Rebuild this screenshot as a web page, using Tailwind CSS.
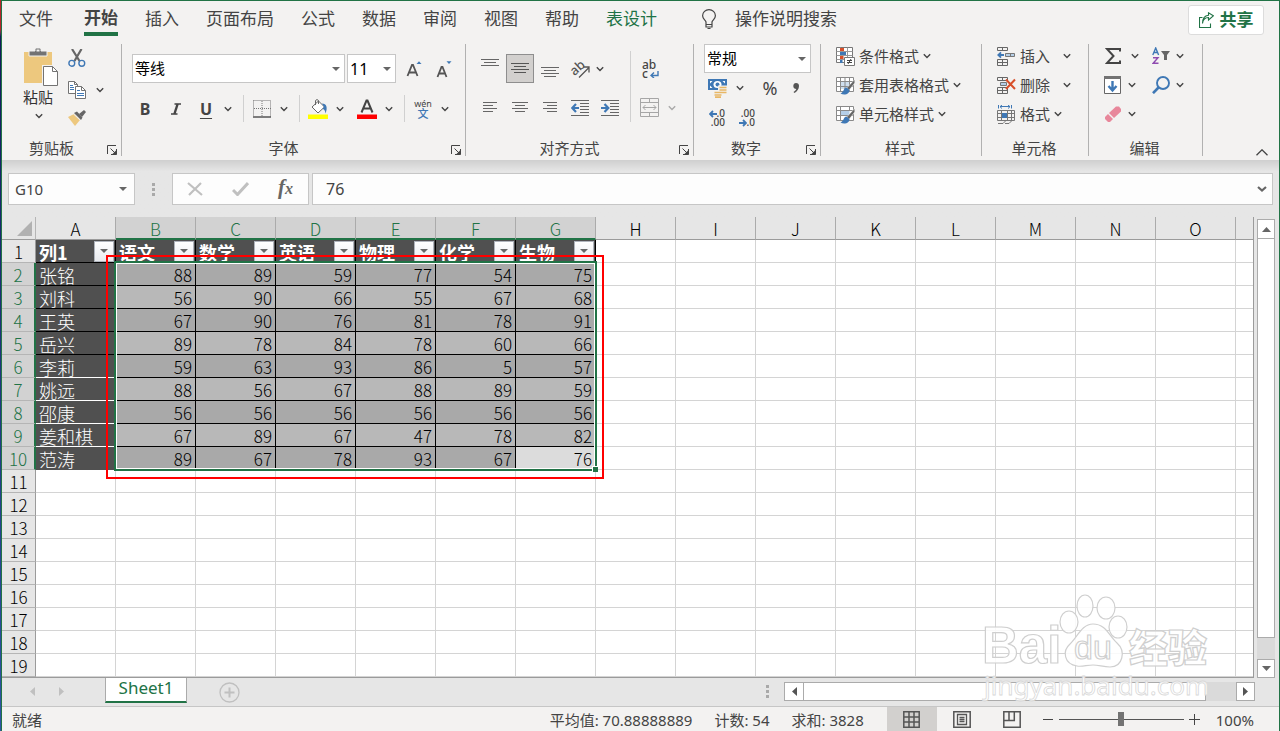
<!DOCTYPE html>
<html lang="zh-CN">
<head>
<meta charset="utf-8">
<title>Sheet1</title>
<meta name="viewport" content="width=device-width, initial-scale=1">
<script src="https://cdn.jsdelivr.net/npm/@tailwindcss/browser@4"></script>
</head>
<body class="flex h-screen overflow-hidden bg-[#e6e6e6] font-['Noto_Sans','Noto_Sans_CJK_SC',sans-serif] text-[15px] text-[#444444]">

<svg class="hidden" aria-hidden="true">
  <symbol id="chev" viewBox="0 0 8 6"><path d="M.8 1.2 4 4.4 7.2 1.2" fill="none" stroke="currentColor" stroke-width="1.4"/></symbol>
  <symbol id="tri" viewBox="0 0 8 4"><path d="M0 0h8L4 4z" fill="currentColor"/></symbol>
  <symbol id="launch" viewBox="0 0 10 10"><path d="M.5 9V.5H9M3.5 3.500 9 9M9.500 4v5.500H4" fill="none" stroke="currentColor"/><path d="M9.500 5v4.500H5z" fill="currentColor"/></symbol>
  <symbol id="brushtable" viewBox="0 0 19 19"><path d="M.5 1.500h17v14H.5z" fill="#fff"/><path d="M4.500 5h9v8h-9z" fill="#cfdfee"/><path d="M.5 1.500h17v14H.5zM.5 5.500h17M.5 10.500h17M4.500 1.500v14M9 1.500v14M13.500 1.500v14" fill="none" stroke="#8a8a8a"/><path d="M19 3v4l-6 8-3-2.500z" fill="#f3f2f1"/><path d="m18.500 4-7.500 8 2 2L18.500 7z" fill="#666"/><path d="M10.500 11.500c-3 0-2 4-6 6 4 2.500 9 .5 9-3.500z" fill="#3f78b5"/></symbol>
  <symbol id="brushcell" viewBox="0 0 19 19"><path d="M.5 1.500h17v14H.5z" fill="#fff"/><path d="M4.500 5.500h9v5h-9z" fill="#b5cfe8"/><path d="M.5 1.500h17v14H.5zM.5 5.500h17M.5 10.500h17M4.500 1.500v14M13.500 1.500v4" fill="none" stroke="#8a8a8a"/><path d="M19 3v4l-6 8-3-2.500z" fill="#f3f2f1"/><path d="m18.500 4-7.500 8 2 2L18.500 7z" fill="#666"/><path d="M10.500 11.500c-3 0-2 4-6 6 4 2.500 9 .5 9-3.500z" fill="#3f78b5"/></symbol>
</svg>

<div class="w-px shrink-0 bg-linear-to-b from-[#b3262b] from-4% via-[#131a5c] via-5% to-[#2f55a4]"></div>

<div class="flex min-w-0 flex-1 flex-col border-x border-t border-[#217346]">

  <header class="bg-[#f3f2f1]">
    <nav class="flex h-[39px] items-start pr-[15px] pl-[17px] text-[17px]" aria-label="功能区选项卡">
      <div class="flex gap-[27px] leading-8">
        <a href="#" class="pt-[2px]">文件</a>
        <a href="#" class="ml-1 border-b-4 border-[#217346] pt-[2px] font-bold leading-[29px]">开始</a>
        <a href="#" class="pt-[2px]">插入</a>
        <a href="#" class="pt-[2px]">页面布局</a>
        <a href="#" class="pt-[2px]">公式</a>
        <a href="#" class="pt-[2px]">数据</a>
        <a href="#" class="pt-[2px]">审阅</a>
        <a href="#" class="pt-[2px]">视图</a>
        <a href="#" class="pt-[2px]">帮助</a>
        <a href="#" class="pt-[2px] text-[#217346]">表设计</a>
      </div>
      <button class="ml-11 flex items-center gap-[18px] pt-[2px] leading-8">
        <svg class="h-5 w-4" viewBox="0 0 16 20" fill="none" stroke="#444" stroke-width="1.2"><path d="M5 15.500V13C4.500 11 1.600 10 1.600 6.800a6.400 6.200 0 0 1 12.800 0C14.400 10 11.500 11 11 13v2.500zM5 15.500v2.500h6v-2.500M6.500 19.500h3"/></svg>
        操作说明搜索
      </button>
      <button class="mt-1 ml-auto flex h-[30px] w-[76px] items-center justify-center gap-[6px] rounded-[3px] border border-[#dcdcdc] bg-white text-[17px] font-bold text-[#217346]">
        <svg class="h-4 w-[15px]" viewBox="0 0 15 16" fill="none" stroke="#217346" stroke-width="1.1"><path d="M3.500 5.500h-3v10h11v-4"/><path d="M3.500 11.500C4 7.500 6 5.500 9.500 5.500V8l4.800-4.200L9.500.8v2.400C5.500 3.500 3.500 6.500 3.500 11.500z"/></svg>
        共享
      </button>
    </nav>

    <div class="flex pt-1">
      <!-- clipboard -->
      <section class="flex h-[112px] w-[120px] shrink-0 flex-col justify-between border-r border-[#b1b1b1]">
        <div class="flex pl-[21px]">
          <button class="flex w-[37px] flex-col items-start pt-1">
            <svg class="h-[39px] w-9" viewBox="0 0 36 39"><path d="M1 4h28v31H1z" fill="#edc87e"/><path d="M6 8V3h6V1.500Q12 0 13.500 0h3Q18 0 18 1.500V3h6v5z" fill="#737373" stroke="#f3f2f1"/><path d="M13.500 3.500h3v-2h-3z" fill="#f3f2f1"/><path d="M19 17h17v22H19z" fill="#f3f2f1"/><path d="M20.500 18.500h9l5 5v14h-14z" fill="#fff" stroke="#737373"/><path d="M29.500 18.500v5h5" fill="none" stroke="#737373"/></svg>
            <span class="leading-5 text-[#333]">粘贴</span>
            <svg class="mt-[6px] ml-3 h-[6px] w-2"><use href="#chev"/></svg>
          </button>
          <div class="flex flex-col gap-[6px] pl-2">
            <button aria-label="剪切" class="flex h-6 items-center pt-1"><svg class="h-[18px] w-[18px]" viewBox="0 0 18 18" fill="none"><path d="m4 0 7.500 12M13.500 0 6.500 12" stroke="#666" stroke-width="2.200"/><circle cx="3.800" cy="14.300" r="2.900" stroke="#3f78b5" stroke-width="1.400"/><circle cx="13.800" cy="14.300" r="2.900" stroke="#3f78b5" stroke-width="1.400"/></svg></button>
            <button aria-label="复制" class="flex h-7 items-center gap-[10px] pt-1"><svg class="h-[18px] w-[18px]" viewBox="0 0 18 18" fill="#fff" stroke="#737373"><path d="M.5.5h6l3 3v9h-9z"/><path d="M7.500 5.500h6l4 4v8h-10z"/><path d="M13.500 5.500v4h4M6.500.5v3h3" fill="none"/><path d="M2 4.500h3M2 6.500h4M2 8.500h4M9 9.500h3M9 12.500h7M9 14.500h7" stroke="#3f78b5"/></svg><svg class="h-[6px] w-2"><use href="#chev"/></svg></button>
            <button aria-label="格式刷" class="flex h-5 items-center"><svg class="h-4 w-[18px]" viewBox="0 0 18 16"><path d="m0 7 6-3 6 6-5 6z" fill="#edc87e"/><path d="m6 3 3-1.500 5.500 6L13 10z" fill="#666"/><path d="m11 4 5-4 2 2-4 5z" fill="#666"/><path d="m5.500 4 7 6.500" stroke="#f3f2f1"/></svg></button>
          </div>
        </div>
        <footer class="flex items-center pr-1 leading-4"><span class="flex-1 text-center">剪贴板</span><button aria-label="剪贴板设置" class="pt-1 pl-[6px]"><svg class="h-[10px] w-[10px]"><use href="#launch"/></svg></button></footer>
      </section>

      <!-- font -->
      <section class="flex h-[112px] w-[344px] shrink-0 flex-col justify-between border-r border-[#b1b1b1]">
        <div class="pt-[10px] pl-2">
          <div class="flex gap-[2px] pl-[2px]">
            <label class="relative flex items-center">
              <select aria-label="字体" class="h-[29px] w-[213px] appearance-none border border-[#c6c6c6] bg-white pl-[2px] text-black"><option>等线</option></select>
              <svg class="absolute right-[5px] h-1 w-2 text-[#666]"><use href="#tri"/></svg>
            </label>
            <label class="relative flex items-center">
              <select aria-label="字号" class="h-[29px] w-[49px] appearance-none border border-[#c6c6c6] bg-white pl-[2px] text-[16px] text-black"><option>11</option></select>
              <svg class="absolute right-[5px] h-1 w-2 text-[#666]"><use href="#tri"/></svg>
            </label>
            <button aria-label="增大字号" class="flex w-8 items-center justify-center"><svg class="h-[18px] w-4" viewBox="0 0 16 18"><path d="M10.500 4 13 1.300 15.500 4z" fill="#3f78b5"/><path d="m1.500 16 4.500-11h1l4.500 11M3.200 12.500h6.600" fill="none" stroke="#555" stroke-width="1.800"/></svg></button>
            <button aria-label="减小字号" class="flex w-6 items-center justify-center"><svg class="h-[18px] w-4" viewBox="0 0 16 18"><path d="M10.500 1.300 13 4l2.500-2.700z" fill="#3f78b5"/><path d="m1.500 17 4-10h1l4 10M3 13.500h6" fill="none" stroke="#555" stroke-width="1.800"/></svg></button>
          </div>
          <div class="mt-3 flex h-[27px] items-center text-[16px]">
            <button class="w-[30px] font-bold">B</button>
            <button class="flex w-8 justify-center" aria-label="倾斜"><svg class="h-3 w-[10px]" viewBox="0 0 10 12"><path d="M3.500 1H10M0 11h6.500" stroke="#444" stroke-width="1.500"/><path d="M6.600 1 3.400 11" stroke="#444" stroke-width="2.400"/></svg></button>
            <button class="w-7 font-bold underline underline-offset-[3px]">U</button>
            <button aria-label="下划线选项" class="flex w-4 justify-center"><svg class="h-[6px] w-2"><use href="#chev"/></svg></button>
            <span class="mr-2 ml-[7px] h-[27px] w-px bg-[#d0d0d0]"></span>
            <button aria-label="边框" class="flex w-10 items-center gap-2"><svg class="ml-px h-[18px] w-[19px]" viewBox="0 0 19 18"><path d="M.5.500h17v16M.5.500v16M9 1v16M1 8.500h17" fill="none" stroke="#777" stroke-dasharray="1 1"/><path d="M0 17h18" stroke="#555" stroke-width="1.500"/></svg><svg class="h-[6px] w-2"><use href="#chev"/></svg></button>
            <span class="mr-2 ml-[7px] h-[27px] w-px bg-[#d0d0d0]"></span>
            <button aria-label="填充颜色" class="flex w-10 items-center gap-2"><svg class="h-5 w-5" viewBox="0 0 20 20"><path d="m4 8 6.500-6 6 6-6.500 6z" fill="#fff" stroke="#666"/><path d="M7.500 6V1.500q1.500-2 3 0V5" fill="none" stroke="#666"/><path d="M14 4.500c4.500 0 6 4 3.500 10C17 11 16 10 14.500 10L16 8z" fill="#3f78b5"/><path d="M0 15.500h20V20H0z" fill="#ff0"/></svg><svg class="h-[6px] w-2"><use href="#chev"/></svg></button>
            <button aria-label="字体颜色" class="ml-[9px] flex w-10 items-center gap-2"><svg class="h-5 w-5" viewBox="0 0 20 20"><path d="m4.500 13.500 5-12h1l5 12M6.500 9.500h7" fill="none" stroke="#444" stroke-width="2"/><path d="M0 15.500h20V20H0z" fill="#f00"/></svg><svg class="h-[6px] w-2"><use href="#chev"/></svg></button>
            <span class="mr-2 ml-[7px] h-[27px] w-px bg-[#d0d0d0]"></span>
            <button aria-label="拼音指南" class="flex w-10 items-center gap-2"><span class="flex w-5 flex-col items-center text-[9px] leading-[9px]">wén<b class="text-[11px] leading-[11px] font-medium text-[#3f78b5]">文</b></span><svg class="h-[6px] w-2"><use href="#chev"/></svg></button>
          </div>
        </div>
        <footer class="flex items-center pr-1 leading-4"><span class="flex-1 text-center">字体</span><button aria-label="字体设置" class="pt-1 pl-[6px]"><svg class="h-[10px] w-[10px]"><use href="#launch"/></svg></button></footer>
      </section>

      <!-- alignment -->
      <section class="flex h-[112px] w-[228px] shrink-0 flex-col justify-between border-r border-[#b1b1b1]">
        <div class="flex pt-[7px] pl-[10px]">
          <div class="flex w-[155px] flex-col gap-[10px] border-r border-[#d0d0d0] pt-[3px]">
            <div class="flex h-[29px] gap-[2px]">
              <button aria-label="顶端对齐" class="flex w-7 justify-center pt-[5px]"><svg class="h-2 w-[18px]" viewBox="0 0 18 8"><path d="M0 .5h18M3 3.500h12M0 6.500h18" stroke="#666"/></svg></button>
              <button aria-label="垂直居中" aria-pressed="true" class="flex w-7 items-center justify-center border border-[#8e8e8e] bg-[#d2d0ce]"><svg class="h-[11px] w-[18px]" viewBox="0 0 18 11"><path d="M0 .5h18M3 3.500h12M0 6.500h18M3 9.500h12" stroke="#555"/></svg></button>
              <button aria-label="底端对齐" class="flex w-7 items-end justify-center pb-[5px]"><svg class="h-[11px] w-[18px]" viewBox="0 0 18 11"><path d="M0 .5h18M3 3.500h12M0 6.500h18M3 9.500h12" stroke="#666"/></svg></button>
              <button aria-label="方向" class="flex items-center gap-[2px]"><span class="flex w-7 justify-center"><svg class="h-[19px] w-[19px] overflow-visible" viewBox="0 0 19 19"><text x="0" y="14" transform="rotate(-42 6 11)" font-family="Noto Sans" font-size="13" font-weight="500" fill="#555">ab</text><path d="m8 18.500 10-10M12.500 8H18v5.500" fill="none" stroke="#555" stroke-width="1.300"/></svg></span><svg class="h-[6px] w-2"><use href="#chev"/></svg></button>
            </div>
            <div class="flex h-[29px] gap-[2px]">
              <button aria-label="左对齐" class="flex w-7 items-center justify-center"><svg class="h-[11px] w-[14px]" viewBox="0 0 14 11"><path d="M0 .5h14M0 3.500h10M0 6.500h14M0 9.500h10" stroke="#666"/></svg></button>
              <button aria-label="居中" class="flex w-7 items-center justify-center"><svg class="h-[11px] w-4" viewBox="0 0 16 11"><path d="M0 .5h16M3 3.500h10M0 6.500h16M3 9.500h10" stroke="#666"/></svg></button>
              <button aria-label="右对齐" class="flex w-7 items-center justify-center"><svg class="h-[11px] w-[14px]" viewBox="0 0 14 11"><path d="M0 .5h14M4 3.500h10M0 6.500h14M4 9.500h10" stroke="#666"/></svg></button>
              <button aria-label="减少缩进量" class="flex w-7 items-center justify-center"><svg class="h-4 w-[18px]" viewBox="0 0 18 16"><path d="M0 .5h18M9 3.500h9M9 6.500h9M9 9.500h9M9 12.500h9M0 15.500h18" stroke="#666"/><path d="M8 8H2M5 4 1.200 8 5 12" fill="none" stroke="#3f78b5" stroke-width="2.200"/></svg></button>
              <button aria-label="增加缩进量" class="flex w-7 items-center justify-center"><svg class="h-4 w-[18px]" viewBox="0 0 18 16"><path d="M0 .5h18M9 3.500h9M9 6.500h9M9 9.500h9M9 12.500h9M0 15.500h18" stroke="#666"/><path d="M0 8h6M3.500 4l3.800 4-3.800 4" fill="none" stroke="#3f78b5" stroke-width="2.200"/></svg></button>
            </div>
          </div>
          <div class="flex flex-col gap-[10px] pt-[3px] pl-[9px]">
            <button aria-label="自动换行" class="relative flex h-[29px] w-5 flex-col items-start justify-center pl-[2px] text-[12px] leading-[9px] font-medium"><span>ab</span><span>c</span><svg class="absolute right-px bottom-[5px] h-[7px] w-[9px]" viewBox="0 0 9 7"><path d="M8 0v4.500H1.500M4 1.500l-3 3L4 7" fill="none" stroke="#3f78b5" stroke-width="1.400"/></svg></button>
            <button aria-label="合并后居中" class="flex h-[29px] items-center gap-[9px] text-[#a9a9a9]"><svg class="h-[19px] w-[19px]" viewBox="0 0 19 19" fill="none" stroke="#a6a6a6"><path d="M.5.500h18v18H.5zM.5 4.500h18M.5 14.500h18M9.500.500v4M9.500 14.500v4M3 9.500h13M5.500 7 3 9.500 5.500 12M13.500 7 16 9.500 13.500 12"/></svg><svg class="h-[6px] w-2"><use href="#chev"/></svg></button>
          </div>
        </div>
        <footer class="flex items-center pr-1 leading-4"><span class="flex-1 text-center">对齐方式</span><button aria-label="对齐设置" class="pt-1 pl-[6px]"><svg class="h-[10px] w-[10px]"><use href="#launch"/></svg></button></footer>
      </section>

      <!-- number -->
      <section class="flex h-[112px] w-[127px] shrink-0 flex-col justify-between border-r border-[#b1b1b1]">
        <div class="pl-[10px]">
          <label class="relative flex w-[107px] items-center">
            <select aria-label="数字格式" class="h-[29px] w-full appearance-none border border-[#c6c6c6] bg-white pl-[2px] text-black"><option>常规</option></select>
            <svg class="absolute right-[5px] h-1 w-2 text-[#666]"><use href="#tri"/></svg>
          </label>
          <div class="flex h-[30px] items-center pl-1">
            <button aria-label="会计数字格式" class="flex items-center gap-2"><svg class="h-[19px] w-5" viewBox="0 0 20 19"><path d="M0 0h19v11H0z" fill="#3f78b5"/><path d="M2 2h2.500L2 4.500zM17 2h-2.500L17 4.500zM2 9V6.500L4.500 9z" fill="#fff"/><ellipse cx="9.500" cy="5.500" rx="4" ry="3.500" fill="#fff"/><circle cx="9.500" cy="5.500" r="2" fill="#3f78b5"/><path d="M10 6.500h10V18H6v-6.500h4z" fill="#f3f2f1"/><path d="M11.500 8.500h7M11.500 11h7M11.500 13.500h7M6.500 13.500h7M6.500 16h7M7 18.200h6" stroke="#e8b765" stroke-width="1.700"/></svg><svg class="h-[6px] w-2"><use href="#chev"/></svg></button>
            <button class="w-11 pl-2 text-center text-[18px] leading-6">%</button>
            <button class="flex w-4 justify-center" aria-label="千位分隔样式"><svg class="h-[10px] w-[6px]" viewBox="0 0 6 10"><path d="M3 0c2 0 3 1.200 3 3 0 3-2 5.500-4.500 7L.5 9C2 8 3 7 3.300 6 1.500 6 .3 4.800.3 3S1.500 0 3 0z" fill="#555"/></svg></button>
          </div>
          <div class="flex h-[30px] items-center gap-[14px] pl-[5px] text-[10px] leading-[9px] font-medium">
            <button aria-label="增加小数位数" class="flex w-4 flex-col items-end"><span class="flex items-center"><svg class="h-2 w-2" viewBox="0 0 8 8"><path d="M8 4H1.500M4 1 1 4l3 3" fill="none" stroke="#3f78b5" stroke-width="1.800"/></svg>.0</span><span>.00</span></button>
            <button aria-label="减少小数位数" class="flex w-4 flex-col items-end"><span>.00</span><span class="flex items-center"><svg class="h-2 w-2" viewBox="0 0 8 8"><path d="M0 4h6.500M4 1l3 3-3 3" fill="none" stroke="#3f78b5" stroke-width="1.800"/></svg>.0</span></button>
          </div>
        </div>
        <footer class="flex items-center pr-1 leading-4"><span class="flex-1 text-center">数字</span><button aria-label="数字设置" class="pt-1 pl-2"><svg class="h-[10px] w-[10px]"><use href="#launch"/></svg></button></footer>
      </section>

      <!-- styles -->
      <section class="flex h-[112px] w-[161px] shrink-0 flex-col justify-between border-r border-[#b1b1b1]">
        <div class="flex flex-col gap-[5px] pl-[15px]">
          <button class="flex h-6 items-center gap-1"><svg class="h-[19px] w-[19px]" viewBox="0 0 19 19"><path d="M.5.500h16v15H.5z" fill="#fff" stroke="#777"/><path d="M.5 4.500h16M.5 8.500h16M.5 12.500h16M4.500.500v15M11.500.500v15" stroke="#999"/><path d="M4 1h4v3H4zM4 9h3.500v3H4z" fill="#d8502b"/><path d="M4 5h6v3H4zM4 13h2.500v3H4z" fill="#3f78b5"/><path d="M8.500 10.500h10v8h-10z" fill="#fff" stroke="#777"/><path d="M11 13.500h5M11 15.500h5M15 12l-3 5" stroke="#444"/></svg>条件格式<svg class="h-[6px] w-2"><use href="#chev"/></svg></button>
          <button class="flex h-6 items-center gap-1"><svg class="h-[19px] w-[19px]"><use href="#brushtable"/></svg>套用表格格式<svg class="h-[6px] w-2"><use href="#chev"/></svg></button>
          <button class="flex h-6 items-center gap-1"><svg class="h-[19px] w-[19px]"><use href="#brushcell"/></svg>单元格样式<svg class="h-[6px] w-2"><use href="#chev"/></svg></button>
        </div>
        <footer class="pr-[2px] text-center leading-4">样式</footer>
      </section>

      <!-- cells -->
      <section class="flex h-[112px] w-[107px] shrink-0 flex-col justify-between border-r border-[#b1b1b1]">
        <div class="flex flex-col gap-[5px] pr-[17px] pl-[15px]">
          <button class="flex h-6 items-center gap-1"><svg class="h-[19px] w-[19px]" viewBox="0 0 19 19" fill="none" stroke="#666"><path d="M.5.500h10v3H.5zM5.500.500v3M.5 12.500h10v6H.5zM5.500 12.500v6M.5 15.500h10"/><path d="M8.500 6.500h9v3h-9zM13.500 6.500v3" fill="#b5cfe8" stroke="#777"/><path d="M7 8H1.500M4 5.300 1.300 8 4 10.700" stroke="#3f78b5" stroke-width="1.800"/></svg>插入<svg class="ml-auto h-[6px] w-2"><use href="#chev"/></svg></button>
          <button class="flex h-6 items-center gap-1"><svg class="h-[19px] w-[19px]" viewBox="0 0 19 19" fill="none" stroke="#666"><path d="M.5 1.500h10v3H.5zM5.500 1.500v3M.5 11.500h10v6H.5zM5.500 11.500v6M.5 14.500h10"/><path d="M3.500 6.500h6v3h-6z" fill="#b5cfe8" stroke="#777"/><path d="m9 3.500 9 9.500M18 3.500 9 13" stroke="#d8502b" stroke-width="2"/></svg>删除<svg class="ml-auto h-[6px] w-2"><use href="#chev"/></svg></button>
          <button class="flex h-6 items-center gap-1"><svg class="h-[19px] w-[19px]" viewBox="0 0 19 19" fill="none" stroke="#777"><path d="M1.500 0v3.500M14.500 0v3.500M3 1.500h10M5 0 3 1.700 5 3.500M11 0l2 1.700-2 1.800" stroke="#3f78b5"/><path d="M.5 5.500h17v10H.5zM.5 8.500h17M.5 12.500h17M4.500 5.500v10M10.500 5.500v10M14.500 5.500v10"/><path d="M5 8h5v5H5z" fill="#3f78b5" stroke="none"/><path d="M1 18.500h5l3-3M8 18.500h4l3-3"/></svg>格式<svg class="h-[6px] w-2"><use href="#chev"/></svg></button>
        </div>
        <footer class="pr-[2px] text-center leading-4">单元格</footer>
      </section>

      <!-- editing -->
      <section class="flex h-[112px] w-[114px] shrink-0 flex-col justify-between border-r border-[#b1b1b1]">
        <div class="grid grid-cols-[48px_1fr] gap-y-[5px] pl-[15px]">
          <button aria-label="自动求和" class="flex h-6 items-center gap-[10px]"><svg class="ml-px h-4 w-4" viewBox="0 0 16 16"><path d="M15 3.500V1H2l6.500 7L2 15h13v-2.500" fill="none" stroke="#444" stroke-width="2"/></svg><svg class="h-[6px] w-2"><use href="#chev"/></svg></button>
          <button aria-label="排序和筛选" class="flex h-6 items-center gap-[6px]"><svg class="h-[18px] w-[18px]" viewBox="0 0 18 18" fill="none"><path d="M.8 8 3.700 1 6.600 8M1.800 5.500h3.800" stroke="#3f78b5" stroke-width="1.400"/><path d="M1 10.700h5L1.200 16.300h5.300" stroke="#8f4bb0" stroke-width="1.400"/><path d="M9 4h9l-3 4v5h-3V8z" fill="#666"/></svg><svg class="h-[6px] w-2"><use href="#chev"/></svg></button>
          <button aria-label="填充" class="flex h-6 items-center gap-[7px]"><svg class="h-[18px] w-[17px]" viewBox="0 0 17 18"><path d="M.5.500h16v17H.5z" fill="#fff" stroke="#666"/><path d="M0 0h17v3H0z" fill="#737373"/><path d="M8.500 5v9M4.500 10l4 4.500 4-4.500" fill="none" stroke="#3f78b5" stroke-width="2.400"/></svg><svg class="h-[6px] w-2"><use href="#chev"/></svg></button>
          <button aria-label="查找和选择" class="flex h-6 items-center gap-[6px]"><svg class="h-[18px] w-[18px]" viewBox="0 0 18 18" fill="none" stroke="#3f78b5"><circle cx="11" cy="7" r="6" stroke-width="1.900"/><path d="M7 11 1 17.200" stroke-width="2.600"/></svg><svg class="h-[6px] w-2"><use href="#chev"/></svg></button>
          <button aria-label="清除" class="flex h-6 items-center gap-[7px]"><svg class="h-4 w-[17px]" viewBox="0 0 17 16"><path d="m1 11 3-3 5 5-3 3H4l-3-3z" fill="#e8879b"/><path d="m5 7 7-6.500h3L17 3v2.500L10 12z" fill="#e8879b"/></svg><svg class="h-[6px] w-2"><use href="#chev"/></svg></button>
        </div>
        <footer class="pr-[2px] text-center leading-4">编辑</footer>
      </section>
      <div class="flex flex-1 items-end justify-end pr-[11px]"><button aria-label="折叠功能区"><svg class="h-[7px] w-3" viewBox="0 0 12 7"><path d="m.5 6.300 5.500-5.500 5.500 5.500" fill="none" stroke="#444" stroke-width="1.300"/></svg></button></div>
    </div>
    <div class="h-1"></div>
  </header>

  <!-- formula bar -->
  <div class="bg-linear-to-b from-[#cfcfcf] to-[#e6e6e6] to-20% pt-[13px] pb-3">
    <div class="flex h-8 items-stretch pr-[6px] pl-[6px]">
      <label class="flex w-[127px] items-center border border-[#c6c6c6] bg-[#fdfdfd] pr-[7px] pl-[6px]">
        <input aria-label="名称框" value="G10" class="min-w-0 flex-1 bg-transparent text-[15px] outline-none">
        <svg class="h-1 w-2 text-[#666]"><use href="#tri"/></svg>
      </label>
      <div class="flex w-[37px] items-center justify-center"><svg class="h-[13px] w-[3px]" viewBox="0 0 3 13"><path d="M0 0h3v3H0zM0 5h3v3H0zM0 10h3v3H0z" fill="#a9a9a9"/></svg></div>
      <div class="flex w-[137px] items-center justify-between border border-[#c6c6c6] bg-[#fdfdfd] pr-[15px] pl-[14px]">
        <button aria-label="取消"><svg class="h-[14px] w-4" viewBox="0 0 16 14"><path d="m1 1 14 12M14 1 2 13" stroke="#c0c0c0" stroke-width="2.200"/></svg></button>
        <button aria-label="输入"><svg class="h-[14px] w-[17px]" viewBox="0 0 17 14"><path d="m1 8 4.500 4.500L16 1" fill="none" stroke="#c0c0c0" stroke-width="3"/></svg></button>
        <button class="pb-[2px] font-['Liberation_Serif',serif] text-[21px] leading-6 font-bold italic text-[#666]">f<span class="text-[16px]">x</span></button>
      </div>
      <label class="ml-[3px] flex flex-1 items-center border border-[#c6c6c6] bg-[#fdfdfd] pr-[5px] pb-px pl-[13px]">
        <input aria-label="编辑栏" value="76" class="min-w-0 flex-1 bg-transparent text-[16px] outline-none">
        <svg class="h-[6px] w-[10px] text-[#666]" viewBox="0 0 10 6"><path d="m1 1 4 3.500L9 1" fill="none" stroke="currentColor" stroke-width="2.200"/></svg>
      </label>
    </div>
  </div>

  <!-- worksheet -->
  <main class="flex min-h-0 flex-1">
    <div class="relative min-w-0 flex-1 overflow-hidden border-r border-b border-[#9b9b9b]">
      <table id="sheet" class="w-full table-fixed border-separate border-spacing-0 font-['Noto_Sans_CJK_SC',sans-serif] text-[16px] font-light text-black">
        <colgroup id="cols"><col class="w-[34px]"></colgroup>
        <tbody id="rows"></tbody>
      </table>
      <div class="pointer-events-none absolute top-[44px] left-[112px] h-[210px] w-[483px] border-2 border-[#217346]">
        <div class="h-full w-full border border-white"></div>
        <span class="absolute -right-[3px] -bottom-[3px] h-[6px] w-[6px] border-t border-l border-white bg-[#217346]"></span>
      </div>
      <div class="pointer-events-none absolute top-[38px] left-[104px] h-[224px] w-[498px] border-2 border-[#ff0000]"></div>
    </div>
    <div class="flex w-[25px] flex-col pt-[2px] pr-1 pl-[3px]">
      <button aria-label="向上滚动" class="flex h-5 items-center justify-center border border-[#ababab] bg-white text-[#666]"><svg class="h-[5px] w-[9px]" viewBox="0 0 9 5"><path d="M0 5h9L4.500 0z" fill="currentColor"/></svg></button>
      <div class="flex flex-1 flex-col bg-[#dadada]"><div class="h-[95%] border border-t-0 border-[#ababab] bg-white"></div></div>
      <button aria-label="向下滚动" class="flex h-[19px] items-center justify-center border border-[#ababab] bg-white text-[#666]"><svg class="h-[5px] w-[9px]" viewBox="0 0 9 5"><path d="M0 0h9L4.500 5z" fill="currentColor"/></svg></button>
    </div>
  </main>

  <!-- sheet tabs -->
  <div class="flex h-[28px] pr-6 pl-7">
    <div class="flex w-[75px] items-center gap-6 pb-[2px] text-[#c0c0c0]">
      <button aria-label="上一个工作表"><svg class="h-[9px] w-[5px]" viewBox="0 0 5 9"><path d="M5 0v9L0 4.500z" fill="currentColor"/></svg></button>
      <button aria-label="下一个工作表"><svg class="h-[9px] w-[5px]" viewBox="0 0 5 9"><path d="M0 0v9l5-4.500z" fill="currentColor"/></svg></button>
    </div>
    <button class="h-[25px] w-[82px] border-x border-b-2 border-x-[#ababab] border-b-[#217346] bg-white pb-1 text-[17px] leading-5 text-[#217346]">Sheet1</button>
    <button aria-label="新工作表" class="ml-8 self-center"><svg class="h-[21px] w-[21px]" viewBox="0 0 21 21" fill="none" stroke="#c0c0c0"><circle cx="10.500" cy="10.500" r="9.500" stroke-width="1.300"/><path d="M10.500 5.500v10M5.500 10.500h10" stroke-width="2"/></svg></button>
    <div class="ml-auto flex items-center pb-[2px]">
      <svg class="mr-[15px] h-[13px] w-[3px]" viewBox="0 0 3 13"><path d="M0 0h3v3H0zM0 5h3v3H0zM0 10h3v3H0z" fill="#a9a9a9"/></svg>
      <button aria-label="向左滚动" class="flex h-[19px] w-5 items-center justify-center border border-[#ababab] bg-white text-[#555]"><svg class="h-[9px] w-[5px]" viewBox="0 0 5 9"><path d="M5 0v9L0 4.500z" fill="currentColor"/></svg></button>
      <div class="flex h-[19px] w-[432px] bg-[#dadada]"><div class="w-[402px] border border-l-0 border-[#ababab] bg-white"></div></div>
      <button aria-label="向右滚动" class="flex h-[19px] w-[19px] items-center justify-center border border-[#ababab] bg-white text-[#555]"><svg class="h-[9px] w-[5px]" viewBox="0 0 5 9"><path d="M0 0v9l5-4.500z" fill="currentColor"/></svg></button>
    </div>
  </div>

  <!-- status bar -->
  <footer class="flex h-[25px] items-stretch border-t border-[#c6c6c6] bg-[#f3f2f1] pr-[25px] pl-[10px] leading-[26px]">
    <span>就绪</span>
    <div class="ml-auto flex gap-[22px] pr-[23px]"><span>平均值: 70.88888889</span><span>计数: 54</span><span>求和: 3828</span></div>
    <button aria-label="普通" aria-pressed="true" class="flex w-[50px] items-center justify-center bg-[#d2d0ce]"><svg class="h-[17px] w-[17px]" viewBox="0 0 17 17" fill="none" stroke="#555" stroke-width="1.500"><path d="M.8.800h15.400v15.400H.8zM.8 6h15.400M.8 11h15.400M6 .8v15.400M11 .8v15.400"/></svg></button>
    <button aria-label="页面布局" class="flex w-[50px] items-center justify-center"><svg class="h-[17px] w-[18px]" viewBox="0 0 18 17" fill="none" stroke="#555"><path d="M.8.800h16.400v15.400H.8z" stroke-width="1.500"/><path d="M4.500 3.500h9v10h-9zM6.500 6.500h5M6.500 8.500h5M6.500 10.500h5" stroke-width="1.300"/></svg></button>
    <button aria-label="分页预览" class="flex w-[50px] items-center justify-center"><svg class="h-[17px] w-[18px]" viewBox="0 0 18 17" fill="none" stroke="#555" stroke-width="1.500"><path d="M.8.800h16.400v15.400H.8zM.8 9.500h10.500V.8M6 .8v8.700"/></svg></button>
    <button aria-label="缩小" class="ml-[6px] flex items-center"><svg class="h-[11px] w-[11px]" viewBox="0 0 11 11"><path d="M0 5.500h10" stroke="#444"/></svg></button>
    <input type="range" aria-label="显示比例" min="0" max="100" value="50" class="mx-[5px] h-6 w-[125px] appearance-none bg-transparent [&::-webkit-slider-runnable-track]:h-px [&::-webkit-slider-runnable-track]:bg-[#555] [&::-webkit-slider-thumb]:-mt-[7px] [&::-webkit-slider-thumb]:h-[14px] [&::-webkit-slider-thumb]:w-[6px] [&::-webkit-slider-thumb]:appearance-none [&::-webkit-slider-thumb]:bg-[#737373]">
    <button aria-label="放大" class="flex items-center"><svg class="h-[11px] w-[11px]" viewBox="0 0 11 11"><path d="M0 5.500h11M5.500 0v11" stroke="#444"/></svg></button>
    <button class="ml-4">100%</button>
  </footer>
</div>

<!-- watermark -->
<svg class="pointer-events-none absolute right-[64px] bottom-[26px] h-[115px] w-[236px] overflow-visible" viewBox="0 0 236 115" fill="#fff" fill-opacity=".85" stroke="#cfcfcf" stroke-width="1.200">
  <text x="2" y="73" font-family="Liberation Sans" font-size="51" font-weight="700">Bai</text>
  <ellipse cx="89" cy="32" rx="9" ry="11"/><ellipse cx="105" cy="16" rx="8" ry="11"/><ellipse cx="126" cy="18" rx="9" ry="11"/><ellipse cx="138" cy="37" rx="9" ry="11"/>
  <path d="M113 34c13 0 16 12 24 19 9 8 6 24-7 24-7 0-11-2-17-2s-11 2-16 1c-13-2-15-15-7-22 8-8 12-20 23-20z"/>
  <text x="94" y="69" font-family="Liberation Sans" font-size="34">du</text>
  <text x="149" y="72" font-family="Noto Sans CJK SC" font-size="39" font-weight="900">经验</text>
  <text x="4" y="105" font-family="Noto Sans, sans-serif" font-size="26" stroke="#d8d8d8" stroke-width=".8">jingyan.baidu.com</text>
</svg>

<script>
  const letters = 'ABCDEFGHIJKLMNO'.split('');
  const data = [
    ['列1', '语文', '数学', '英语', '物理', '化学', '生物'],
    ['张铭', 88, 89, 59, 77, 54, 75],
    ['刘科', 56, 90, 66, 55, 67, 68],
    ['王英', 67, 90, 76, 81, 78, 91],
    ['岳兴', 89, 78, 84, 78, 60, 66],
    ['李莉', 59, 63, 93, 86, 5, 57],
    ['姚远', 88, 56, 67, 88, 89, 59],
    ['邵康', 56, 56, 56, 56, 56, 56],
    ['姜和棋', 67, 89, 67, 47, 78, 82],
    ['范涛', 89, 67, 78, 93, 67, 76]
  ];
  document.getElementById('cols').innerHTML += '<col class="w-20">'.repeat(15) + '<col>';

  const corner = '<th class="h-[23px] border-r border-b border-r-[#b5b5b5] border-b-[#9b9b9b] bg-[#e6e6e6] p-0"><svg class="ml-[15px] h-[15px] w-[15px]" viewBox="0 0 15 15"><path d="M15 0v15H0z" fill="#b1b1b1"/></svg></th>';
  const head = letters.map((l, i) => i > 0 && i < 7
    ? `<th class="h-[23px] border-r border-b-2 border-r-[#ababab] border-b-[#217346] bg-[#d2d2d2] p-0 pt-[2px] text-[17px] leading-[19px] font-light text-[#217346]">${l}</th>`
    : `<th class="h-[23px] border-r border-b border-r-[#ababab] border-b-[#9b9b9b] bg-[#e6e6e6] p-0 pt-[2px] text-[17px] leading-5 font-light">${l}</th>`).join('');
  let html = `<tr>${corner}${head}<th class="border-b border-[#9b9b9b] bg-[#e6e6e6] p-0"></th></tr>`;

  for (let r = 1; r <= 19; r++) {
    html += r > 1 && r < 11
      ? `<tr><th class="h-[23px] border-r-2 border-b border-r-[#217346] border-b-[#b5b5b5] bg-[#d2d2d2] p-0 pt-[2px] text-[17px] leading-5 font-light text-[#217346]">${r}</th>`
      : `<tr><th class="h-[23px] border-r border-b border-r-[#9b9b9b] border-b-[#b5b5b5] bg-[#e6e6e6] p-0 pt-[2px] text-[17px] leading-5 font-light">${r}</th>`;
    for (let c = 0; c < 15; c++) {
      const v = data[r - 1] && data[r - 1][c];
      if (v === undefined) {
        html += '<td class="border-r border-b border-[#d4d4d4] bg-white p-0"></td>';
      } else if (r === 1) {
        html += `<td class="border-r border-b border-black bg-[#505050] p-0"><div class="flex h-[22px] items-center justify-between pr-px pl-[3px] text-[18px] font-bold text-white"><span class="pt-[2px] leading-5">${v}</span><button aria-label="筛选 ${v}" class="flex h-[21px] w-5 items-center justify-center border border-[#b0b5bd] bg-linear-to-b from-white to-[#e9ebef] text-[#666]"><svg class="h-1 w-2"><use href="#tri"/></svg></button></div></td>`;
      } else if (c === 0) {
        const line = r === 10 ? 'border-[#505050]' : r > 5 ? 'border-white' : 'border-black';
        html += `<td class="border-b ${line} bg-[#505050] p-0 pt-[2px] pl-[3px] text-[18px] leading-5 text-white">${v}</td>`;
      } else {
        const bg = r === 10 && c === 6 ? 'bg-[#dcdcdc]' : r % 2 ? 'bg-[#b8b8b8]' : 'bg-[#a9a9a9]';
        html += `<td class="border-r border-b border-black ${bg} p-0 pt-[2px] pr-[3px] text-right text-[17px] leading-5">${v}</td>`;
      }
    }
    html += '<td class="border-b border-[#d4d4d4] bg-white p-0"></td></tr>';
  }
  document.getElementById('rows').innerHTML = html;
</script>
</body>
</html>
